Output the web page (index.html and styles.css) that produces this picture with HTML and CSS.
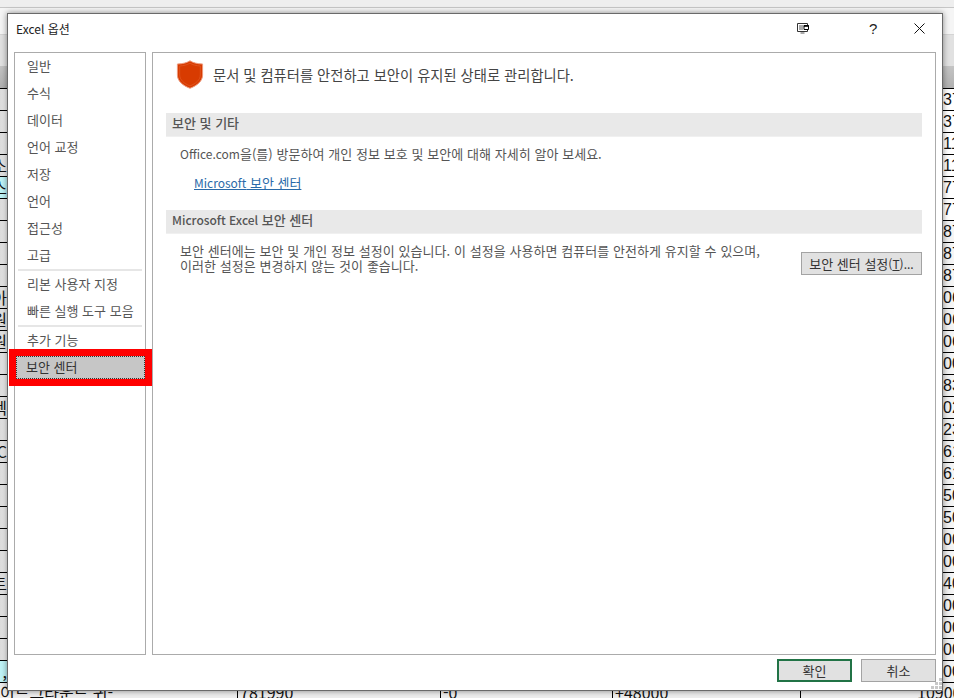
FILE: index.html
```html
<!DOCTYPE html>
<html lang="ko">
<head>
<meta charset="utf-8">
<title>Excel 옵션</title>
<link rel="stylesheet" href="styles.css">
</head>
<body>
<div class="sheet">
  <div class="band band-a"></div>
  <div class="band band-b"></div>
  <div class="band band-c"></div>
  <div class="band band-d"></div>
  <div class="rows">
    <div class="row"><span class="l"></span><span class="r">37</span></div>
    <div class="row"><span class="l"></span><span class="r">37</span></div>
    <div class="row"><span class="l"></span><span class="r">11</span></div>
    <div class="row"><span class="l">소</span><span class="r">11</span></div>
    <div class="row"><span class="l cy">스</span><span class="r">77</span></div>
    <div class="row"><span class="l"></span><span class="r">77</span></div>
    <div class="row"><span class="l"></span><span class="r">87</span></div>
    <div class="row"><span class="l"></span><span class="r">87</span></div>
    <div class="row"><span class="l"></span><span class="r">87</span></div>
    <div class="row"><span class="l">아</span><span class="r">06</span></div>
    <div class="row"><span class="l">원</span><span class="r">06</span></div>
    <div class="row"><span class="l">원</span><span class="r">06</span></div>
    <div class="row"><span class="l"></span><span class="r">00</span></div>
    <div class="row"><span class="l"></span><span class="r">83</span></div>
    <div class="row"><span class="l">텍</span><span class="r">02</span></div>
    <div class="row"><span class="l"></span><span class="r">23</span></div>
    <div class="row"><span class="l">C</span><span class="r">61</span></div>
    <div class="row"><span class="l"></span><span class="r">61</span></div>
    <div class="row"><span class="l"></span><span class="r">50</span></div>
    <div class="row"><span class="l"></span><span class="r">50</span></div>
    <div class="row"><span class="l"></span><span class="r">00</span></div>
    <div class="row"><span class="l"></span><span class="r">00</span></div>
    <div class="row"><span class="l">트</span><span class="r">40</span></div>
    <div class="row"><span class="l"></span><span class="r">00</span></div>
    <div class="row"><span class="l"></span><span class="r">00</span></div>
    <div class="row"><span class="l"></span><span class="r">00</span></div>
    <div class="row"><span class="l cy">,</span><span class="r">00</span></div>
    <div class="row last">
      <span class="c c1">이드그라운드 귀-</span>
      <span class="c c2">781990</span>
      <span class="c c3">-0</span>
      <span class="c c4">+48000</span>
      <span class="c c5">109000</span>
    </div>
  </div>
</div>

<div class="dialog">
  <header class="titlebar">
    <span class="title">Excel 옵션</span>
    <svg class="ico-layout" width="13" height="13" viewBox="0 0 13 13" aria-hidden="true">
      <path d="M.5 1.500h10v8H.5z" fill="#fff" stroke="#333"/>
      <path d="M3 3v5M5 3v5" stroke="#555"/>
      <path d="M3.500 10.500h4v1h-4z" fill="#555"/>
      <path d="M7 3.500h4.500v4H7z" fill="#fff" stroke="#000"/>
      <path d="M7 3.500h4.500v1H7z" fill="#000" stroke="#000" stroke-width=".6"/>
    </svg>
    <span class="help">?</span>
    <svg class="ico-close" width="11" height="11" viewBox="0 0 11 11" aria-hidden="true">
      <path d="M.5.5l10 10M10.500.5l-10 10" stroke="#111" stroke-width="1" fill="none"/>
    </svg>
  </header>

  <div class="body">
    <nav class="nav">
      <div class="item">일반</div>
      <div class="item">수식</div>
      <div class="item">데이터</div>
      <div class="item">언어 교정</div>
      <div class="item">저장</div>
      <div class="item">언어</div>
      <div class="item">접근성</div>
      <div class="item">고급</div>
      <div class="sep"></div>
      <div class="item">리본 사용자 지정</div>
      <div class="item">빠른 실행 도구 모음</div>
      <div class="sep"></div>
      <div class="item">추가 기능</div>
      <div class="item active">보안 센터<span class="redbox"></span></div>
    </nav>

    <main class="main">
      <div class="hero">
        <svg class="shield" width="28" height="29" viewBox="0 0 28 29" aria-hidden="true">
          <path d="M14 .8c3 2 7 3 12.600 3.200v11c0 6-5.400 10.600-12.600 13.300C6.800 25.600 1.400 21 1.400 15V4C7 3.800 11 2.800 14 .8z" fill="#d83b01" stroke="#ee9a7c" stroke-width="1"/>
          <path d="M14 3.200c2.800 1.700 6 2.500 10.300 2.800v9c0 4.700-4.300 8.600-10.300 10.900C8 23.600 3.700 19.700 3.700 15V6C8 5.700 11.200 4.900 14 3.200z" fill="#d83b01" stroke="#e2622f" stroke-width=".6"/>
        </svg>
        <span class="hero-text">문서 및 컴퓨터를 안전하고 보안이 유지된 상태로 관리합니다.</span>
      </div>

      <section class="sec sec-first">
        <h2 class="sec-head">보안 및 기타</h2>
        <p class="sec-p"><span class="lat">Office.com</span>을(를) 방문하여 개인 정보 보호 및 보안에 대해 자세히 알아 보세요.</p>
        <a class="sec-link" href="#"><span class="lat">Microsoft</span> 보안 센터</a>
      </section>

      <section class="sec sec-second">
        <h2 class="sec-head"><span class="lat">Microsoft Excel</span> 보안 센터</h2>
        <div class="sec-row">
          <p class="sec-p2">보안 센터에는 보안 및 개인 정보 설정이 있습니다. 이 설정을 사용하면 컴퓨터를 안전하게 유지할 수 있으며,<br>이러한 설정은 변경하지 않는 것이 좋습니다.</p>
          <button class="btn btn-set" type="button">보안 센터 설정<span class="lat">(<u>T</u>)...</span></button>
        </div>
      </section>
    </main>
  </div>

  <footer class="footer">
    <button class="btn btn-foot btn-ok" type="button">확인</button>
    <button class="btn btn-foot" type="button">취소</button>
  </footer>
  <svg class="grip" width="12" height="12" viewBox="0 0 12 12" aria-hidden="true">
    <path d="M8 0h3v3H8zM4 4h3v3H4zM8 4h3v3H8zM0 8h3v3H0zM4 8h3v3H4zM8 8h3v3H8z" fill="#c8c8c8"/>
  </svg>
</div>
</body>
</html>
```
FILE: styles.css
```css
* { box-sizing: border-box; }
html, body { margin: 0; padding: 0; }
body {
  width: 954px;
  height: 698px;
  overflow: hidden;
  position: relative;
  background: #fff;
  font-family: "Noto Sans CJK KR", "Noto Sans", sans-serif;
  font-size: 13px;
  color: #444;
}
.lat { font-size: 12px; }

/* spreadsheet behind the dialog */
.sheet { width: 954px; height: 698px; overflow: hidden; background: #fff; }
.band-a { height: 8px; background: #eeeeee; border-bottom: 1px solid #c6c6c6; }
.band-b { height: 26px; background: #f5f5f5; }
.band-c { height: 32px; background: #e1e1e1; border-top: 1px solid #d4d4d4; }
.band-d { height: 22px; background: linear-gradient(#c4c4c4, #b0b0b0); }
.rows { display: flex; flex-direction: column; }
.row {
  height: 22px;
  flex: none;
  display: flex;
  justify-content: space-between;
  align-items: center;
  overflow: hidden;
  border-top: 1px solid #000;
  font-family: "Liberation Sans", "Noto Sans CJK KR", sans-serif;
  font-size: 16px;
  color: #111;
  background: linear-gradient(90deg, #dcdcdc 0, #f2f2f2 7px, #fff 8px, #fff 943px, #ececec 943px, #f6f6f6 954px);
}
.row:nth-child(-n+6) { background: linear-gradient(90deg, #dcdcdc 0, #f2f2f2 7px, #fff 8px); }
.l {
  width: 7px;
  height: 21px;
  flex: none;
  overflow: hidden;
  direction: rtl;
  font-family: "Noto Sans CJK KR", sans-serif;
  line-height: 21px;
  white-space: nowrap;
}
.cy { background: #bff4f7; }
.r {
  width: 11px;
  flex: none;
  overflow: hidden;
  line-height: 21px;
  white-space: nowrap;
}
.last { display: block; position: relative; height: 22px; background: #eee; font-family: "Noto Sans CJK KR", sans-serif; }
.c { position: absolute; top: -3px; white-space: nowrap; }
.c1 { left: 0; }
.c2 { left: 237px; border-left: 1px solid #000; padding-left: 2px; }
.c3 { left: 440px; border-left: 1px solid #000; padding-left: 2px; }
.c4 { left: 612px; border-left: 1px solid #000; padding-left: 2px; }
.c5 { left: 800px; width: 160px; border-left: 1px solid #000; padding-left: 116px; }

/* dialog */
.dialog {
  position: absolute;
  left: 7px;
  top: 13px;
  width: 936px;
  height: 678px;
  background: #fff;
  border: 1px solid #6a6a6a;
  box-shadow: 0 0 6px rgba(0, 0, 0, .45);
  display: flex;
  flex-direction: column;
}
.titlebar {
  height: 38px;
  flex: none;
  display: flex;
  align-items: center;
  padding: 0 17px 10px 8px;
  color: #222;
}
.title { flex: 1; font-size: 12px; }
.ico-layout { margin-right: 59px; }
.help { width: 8px; margin-right: 37px; font-family: "Liberation Sans", sans-serif; font-size: 15px; color: #222; }
.ico-close { flex: none; }

.body { flex: 1; display: flex; gap: 6px; padding: 0 6px; min-height: 0; }
.nav {
  width: 132px;
  flex: none;
  border: 1px solid #ababab;
  padding: 0 3px;
  position: relative;
}
.item {
  height: 27px;
  line-height: 26px;
  padding-left: 9px;
  color: #555;
  position: relative;
}
.sep { height: 2px; background: #e6e6e6; }
.active {
  margin: 2px 0 0 -2px;
  height: 23px;
  line-height: 19px;
  padding-left: 9px;
  width: 129px;
  background: #c6c6c6;
  border: 1px dotted #333;
  color: #333;
}
.redbox {
  position: absolute;
  left: -8px;
  top: -8px;
  right: -8px;
  bottom: -8px;
  border: 7px solid #ff0000;
}

.main { flex: 1; border: 1px solid #ababab; padding: 0 13px; min-width: 0; }
.hero { display: flex; align-items: center; height: 42px; padding: 0 0 0 10px; gap: 9px; }
.shield { flex: none; }
.hero-text { font-size: 14.3px; color: #444; white-space: nowrap; }
.sec-first { margin-top: 18px; }
.sec-second { margin-top: 18px; }
.sec-head {
  margin: 0;
  height: 24px;
  line-height: 20px;
  padding-left: 6px;
  background: #e9e9e9;
  border-bottom: 1px solid #f0f0f0;
  font-size: 13px;
  font-weight: 500;
  color: #555;
}
.sec-p { margin: 8px 0 0 14px; line-height: 18px; color: #555; white-space: nowrap; word-spacing: .2px; }
.sec-link {
  display: inline-block;
  margin: 11px 0 0 28px;
  line-height: 17px;
  color: #2a6aa8;
  text-decoration: underline;
}
.sec-row { display: flex; justify-content: space-between; align-items: flex-start; margin-top: 9px; padding-left: 14px; }
.sec-p2 { margin: 0; line-height: 15px; color: #555; white-space: nowrap; word-spacing: .25px; }
.btn {
  font: inherit;
  color: #333;
  background: #e1e1e1;
  border: 1px solid #a3a3a3;
  padding: 0;
  white-space: nowrap;
}
.btn-set { width: 121px; height: 23px; flex: none; margin-top: 9px; }
.footer {
  height: 35px;
  flex: none;
  display: flex;
  justify-content: flex-end;
  align-items: flex-start;
  gap: 9px;
  padding: 4px 6px 0 0;
}
.btn-foot { width: 75px; height: 23px; }
.btn-ok { border: 2px solid #217346; }
.grip { position: absolute; right: -1px; bottom: 0; }
```
